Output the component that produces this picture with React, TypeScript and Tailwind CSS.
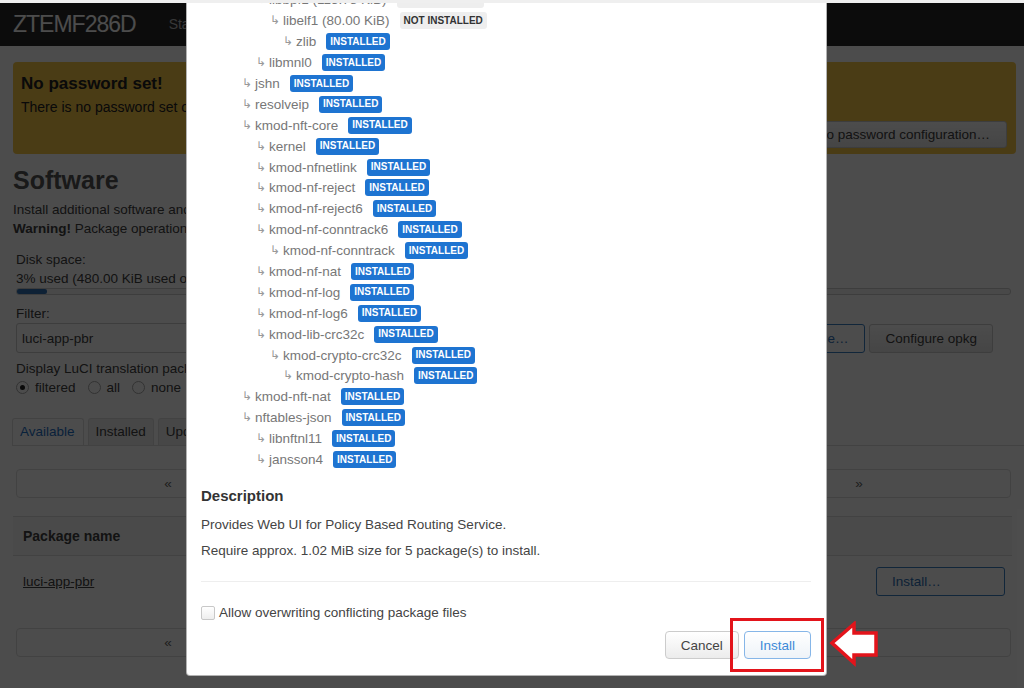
import React from "react";

type Dep = [number, string, boolean];

const deps: Dep[] = [
  [1, "pbr (61.12 KiB)", false],
  [2, "ip-full (265.33 KiB)", false],
  [3, "libbpf1 (115.78 KiB)", false],
  [4, "libelf1 (80.00 KiB)", false],
  [5, "zlib", true],
  [3, "libmnl0", true],
  [2, "jshn", true],
  [2, "resolveip", true],
  [2, "kmod-nft-core", true],
  [3, "kernel", true],
  [3, "kmod-nfnetlink", true],
  [3, "kmod-nf-reject", true],
  [3, "kmod-nf-reject6", true],
  [3, "kmod-nf-conntrack6", true],
  [4, "kmod-nf-conntrack", true],
  [3, "kmod-nf-nat", true],
  [3, "kmod-nf-log", true],
  [3, "kmod-nf-log6", true],
  [3, "kmod-lib-crc32c", true],
  [4, "kmod-crypto-crc32c", true],
  [5, "kmod-crypto-hash", true],
  [2, "kmod-nft-nat", true],
  [2, "nftables-json", true],
  [3, "libnftnl11", true],
  [3, "jansson4", true],
];

const indent: Record<number, string> = {
  1: "pl-[27px]",
  2: "pl-[41px]",
  3: "pl-[55px]",
  4: "pl-[69px]",
  5: "pl-[82px]",
};

const DepRow = ({ dep }: { dep: Dep }) => {
  const [depth, name, ok] = dep;
  return (
    <div className={`flex h-[20.9px] items-center ${indent[depth]}`}>
      <span className="inline-block w-[13px] text-[12px] leading-[19px] text-[#999]">↳</span>
      <span className="text-[#777]">{name}</span>
      {ok ? (
        <span className="ml-[10px] inline-flex h-[17px] items-center rounded-[3px] bg-[#1e74d1] px-[4px] text-[10px] font-bold leading-none text-white">
          INSTALLED
        </span>
      ) : (
        <span className="ml-[10px] inline-flex h-[17px] items-center rounded-[3px] bg-[#eee] px-[4px] text-[10px] font-bold leading-none text-[#333]">
          NOT INSTALLED
        </span>
      )}
    </div>
  );
};

const Radio = ({ label, checked }: { label: string; checked?: boolean }) => (
  <span className="mr-[12px] flex items-center">
    <span className="flex h-[13px] w-[13px] items-center justify-center rounded-full border border-[#aaa] bg-white">
      {checked && <span className="h-[5px] w-[5px] rounded-full bg-[#222]" />}
    </span>
    <span className="ml-[6px]">{label}</span>
  </span>
);

const Pager = () => (
  <div className="mr-[5px] ml-[3px] flex h-[29px] items-center rounded-[4px] border border-[#ddd] text-[#666]">
    <span className="w-[302px] text-center">«</span>
    <span className="flex-1" />
    <span className="w-[302px] text-center">»</span>
  </div>
);

export default function App() {
  return (
    <div className="relative h-[688px] overflow-hidden bg-white font-['Liberation_Sans',Arial,sans-serif] text-[13.5px] leading-[19px] text-[#404040]">
      <div className="relative z-30 h-[3px] bg-[#efefef]" />

      <header className="flex h-[43px] items-center bg-[#2b2b2b] pl-[13px]">
        <span className="text-[23px] tracking-[-1px] text-white">ZTEMF286D</span>
        <nav className="ml-[33px] flex gap-[22px] text-[14px] text-[#bbb]">
          <span>Status</span>
          <span>System</span>
          <span>Services</span>
          <span>Network</span>
          <span>Logout</span>
        </nav>
      </header>

      <main className="pl-[13px] pr-[8px] pt-[16px]">
        <div className="rounded-[4px] bg-[#f7c849] pb-[6px] pl-[8px] pr-[9px] pt-[11px] text-[#222]">
          <h4 className="text-[17px] font-bold leading-[22px]">No password set!</h4>
          <p className="mt-[2px] text-[14px] leading-[20px]">
            There is no password set on this router. Please configure a root password to protect the web interface.
          </p>
          <div className="mt-[4px] flex justify-end">
            <button className="h-[27px] rounded-[3px] border border-[#ccc] bg-linear-to-b from-white to-[#e8e8e8] pl-[15px] pr-[16px] text-[13.5px] text-[#404040]">
              Go to password configuration…
            </button>
          </div>
        </div>

        <h2 className="mt-[11px] text-[25px] font-bold leading-[30px] text-[#555]">Software</h2>
        <p className="mt-[5px]">Install additional software and upgrade existing packages with opkg.</p>
        <p>
          <strong>Warning!</strong> Package operations can break your system.
        </p>

        <section className="pl-[3px] pr-[5px]">
          <div className="mt-[12px]">Disk space:</div>
          <div>3% used (480.00 KiB used of 16.02 MiB, 15.55 MiB free)</div>
          <div className="h-[7px] rounded-[3px] border border-[#ccc] bg-[#f5f5f5]">
            <div className="h-full w-[3%] rounded-[2px] bg-[#2f6fb3]" />
          </div>

          <div className="mt-[9px]">Filter:</div>
          <div className="flex h-[30px] items-center">
            <div className="flex h-[30px] w-[262px] items-center rounded-[3px] border border-[#ccc] px-[5px]">luci-app-pbr</div>
            <button className="ml-[4px] h-[29px] rounded-[3px] border border-[#ccc] px-[15px]">Clear</button>
            <span className="flex-1" />
            <button className="h-[29px] rounded-[3px] border border-[#3b7fc4] px-[15px] text-[#2f6fb5]">Update lists…</button>
            <button className="ml-[4px] h-[29px] rounded-[3px] border border-[#3b7fc4] pl-[15px] pr-[16px] text-[#2f6fb5]">Upload Package…</button>
            <button className="ml-[4px] mr-[18px] h-[29px] rounded-[3px] border border-[#ccc] bg-linear-to-b from-white to-[#e8e8e8] px-[15px]">
              Configure opkg
            </button>
          </div>

          <div className="mt-[6px]">Display LuCI translation packages:</div>
          <div className="flex items-center">
            <Radio label="filtered" checked />
            <Radio label="all" />
            <Radio label="none" />
          </div>
        </section>

        <div className="-mr-[8px] mt-[21px] -ml-[1px] flex gap-[4px] border-b border-[#ddd]">
          <span className="rounded-t-[3px] border border-b-0 border-[#ddd] bg-white pl-[7px] pr-[8px] leading-[26px] text-[#1f6fc5]">Available</span>
          <span className="rounded-t-[3px] border border-b-0 border-[#ddd] bg-[#eee] px-[7px] leading-[26px]">Installed</span>
          <span className="rounded-t-[3px] border border-b-0 border-[#ddd] bg-[#eee] px-[7px] leading-[26px]">Updates</span>
        </div>

        <div className="mt-[23px]">
          <Pager />
        </div>

        <div className="mr-[4px] mt-[18px]">
          <div className="flex h-[40px] items-center border-y border-[#ddd] bg-[#f9f9f9] pl-[10px] text-[14px] font-bold">
            Package name
          </div>
          <div className="flex h-[50px] items-center justify-between pl-[10px] pr-[7px]">
            <span className="underline">luci-app-pbr</span>
            <button className="h-[29px] w-[129px] rounded-[3px] border border-[#3b7fc4] pl-[15px] text-left text-[#2f6fb5]">Install…</button>
          </div>
        </div>

        <div className="mt-[22px]">
          <Pager />
        </div>
      </main>

      <div className="absolute inset-0 z-10 bg-black/70" />

      <div className="absolute bottom-[12px] left-[186px] z-20 w-[641px] rounded-[4px] border border-black/30 bg-white pb-[16px] pl-[14px] pr-[15px]">
        <h4 className="mb-[6px] text-[15px] font-bold leading-[20px] text-[#333]">Dependencies</h4>
        <div className="flex h-[20.9px] items-center pl-[13px] text-[#777]">luci-app-pbr</div>
        {deps.map((d, i) => (
          <DepRow key={i} dep={d} />
        ))}

        <h4 className="mt-[16px] text-[15px] font-bold leading-[20px] text-[#333]">Description</h4>
        <p className="mt-[9px] text-[#444]">Provides Web UI for Policy Based Routing Service.</p>
        <p className="mt-[7px] text-[#444]">Require approx. 1.02 MiB size for 5 package(s) to install.</p>
        <hr className="mt-[21px] border-[#eee]" />
        <label className="mt-[21px] flex h-[19px] items-center text-[#444]">
          <span className="h-[14px] w-[14px] rounded-[2px] border border-[#c8c8c8] bg-linear-to-b from-white to-[#eee]" />
          <span className="ml-[4px]">Allow overwriting conflicting package files</span>
        </label>
        <div className="mt-[9px] flex justify-end gap-[5px]">
          <button className="h-[28px] rounded-[4px] border border-[#ccc] bg-linear-to-b from-white to-[#ececec] px-[15px] text-[#444]">
            Cancel
          </button>
          <button className="h-[28px] rounded-[4px] border border-[#86b6e8] bg-linear-to-b from-white to-[#eef3f8] px-[15px] text-[#3d8ad8]">
            Install
          </button>
        </div>
      </div>

      <div className="absolute left-[730px] top-[618px] z-30 h-[54px] w-[94px] border-[3px] border-[#e3141b]" />
      <svg className="absolute left-[829px] top-[621px] z-30" width="50" height="46" viewBox="0 0 50 46">
        <polygon
          points="3,22 25,3 25,12 47,12 47,34 25,34 25,42"
          fill="#fff"
          stroke="#e3141b"
          strokeWidth="3.5"
          strokeLinejoin="miter"
        />
      </svg>
    </div>
  );
}
